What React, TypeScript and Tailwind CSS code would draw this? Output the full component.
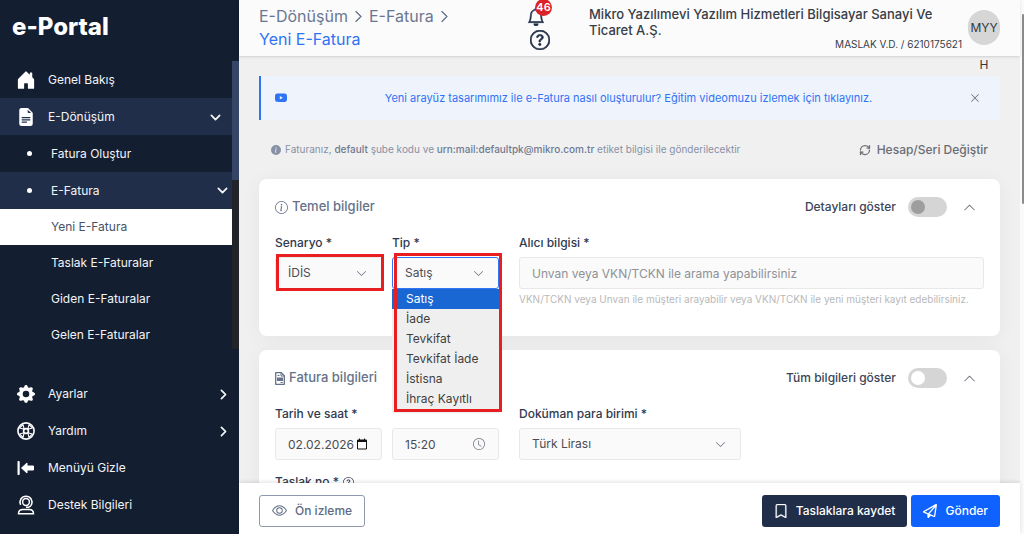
import { useState, type ReactNode } from "react";
import {
  BsBell,
  BsBookmark,
  BsChevronDown,
  BsChevronRight,
  BsChevronUp,
  BsClock,
  BsEye,
  BsFileEarmarkTextFill,
  BsGearFill,
  BsHouseDoorFill,
  BsInfoCircle,
  BsInfoCircleFill,
  BsQuestionCircle,
  BsXLg,
  BsYoutube,
} from "react-icons/bs";
import { FaRegPaperPlane } from "react-icons/fa6";
import { LuRefreshCw } from "react-icons/lu";

const TYPES = ["Satış", "İade", "Tevkifat", "Tevkifat İade", "İstisna", "İhraç Kayıtlı"];

function HideMenuIcon() {
  return (
    <svg viewBox="0 0 18 18" className="size-[18px]" fill="currentColor" aria-hidden="true">
      <rect x="0.5" y="2" width="2.2" height="14" rx="0.8" />
      <path d="M4.500 9l5.500-5v3h6.500v4H10v3z" stroke="currentColor" strokeLinejoin="round" />
    </svg>
  );
}

function HelpRingIcon() {
  return (
    <svg viewBox="0 0 18 18" className="size-[18px]" fill="none" stroke="currentColor" strokeWidth="1.6" aria-hidden="true">
      <circle cx="9" cy="9" r="8.1" />
      <circle cx="9" cy="9" r="2.4" />
      <path d="M7.200 7.200L6 2.600 2.600 6zM10.800 7.200L12 2.600 15.400 6zM7.200 10.800L6 15.400 2.600 12zM10.800 10.800L12 15.400 15.400 12z" strokeWidth="1.1" strokeLinejoin="round" />
    </svg>
  );
}

function SupportIcon() {
  return (
    <svg viewBox="0 0 18 20" className="h-5 w-[18px]" fill="none" stroke="currentColor" strokeWidth="1.5" aria-hidden="true">
      <circle cx="9" cy="7" r="3.400" />
      <path d="M3.600 9.800A6 6 0 1 1 14.400 9.800M9 12.200h2.600a4 4 0 0 0 2.800-2.400" />
      <path d="M1.500 18.700c0-2.700 1.800-4.200 4.400-4.200h6.200c2.600 0 4.400 1.500 4.400 4.200z" />
    </svg>
  );
}

function InvoiceIcon() {
  return (
    <svg viewBox="0 0 10 13" className="h-[13px] w-2.5" fill="none" stroke="currentColor" aria-hidden="true">
      <path d="M1.500 0.700h4.800l3 3v8.600H0.700V0.700z" strokeWidth="1.300" strokeLinejoin="round" />
      <path d="M6 0.700v3.300h3.300M2.500 3.500h2M5.500 10.500h2.200" />
      <rect x="2.500" y="6" width="5" height="2.500" fill="currentColor" />
    </svg>
  );
}

function Logo() {
  return (
    <a href="#" className="flex h-[61px] shrink-0 items-center px-3 pb-2 text-2xl font-extrabold text-white">
      e-Portal
    </a>
  );
}

function NavItem({ icon, label, end, active }: { icon: ReactNode; label: string; end?: ReactNode; active?: boolean }) {
  return (
    <a
      href="#"
      className={`flex h-[37px] shrink-0 items-center gap-3 pt-px pl-4 text-xs text-gray-100 ${active ? "bg-[#212e4a]" : ""}`}
    >
      <span className="flex w-5 justify-center text-white">{icon}</span>
      <span className="flex-1">{label}</span>
      {end}
    </a>
  );
}

function GroupItem({ label, end, active }: { label: string; end?: ReactNode; active?: boolean }) {
  return (
    <a href="#" className={`flex h-[37px] shrink-0 items-center pl-[27px] text-xs text-gray-100 ${active ? "bg-[#212e4a]" : ""}`}>
      <span className="w-6">
        <span className="block size-[5px] rounded-full bg-white" />
      </span>
      <span className="flex-1">{label}</span>
      {end}
    </a>
  );
}

function SubItem({ label, selected }: { label: string; selected?: boolean }) {
  return (
    <a
      href="#"
      className={`flex h-9 shrink-0 items-center pl-[51px] text-xs ${selected ? "bg-white text-[#475166]" : "text-gray-100"}`}
    >
      {label}
    </a>
  );
}

function Sidebar() {
  return (
    <aside className="flex w-[239px] shrink-0 flex-col bg-[#131e31]">
      <Logo />
      <div className="flex h-[288px] overflow-hidden">
        <nav className="flex flex-1 flex-col">
          <NavItem icon={<BsHouseDoorFill size={20} />} label="Genel Bakış" />
          <NavItem
            active
            icon={<BsFileEarmarkTextFill size={18} />}
            label="E-Dönüşüm"
            end={<BsChevronDown size={11} strokeWidth={1.5} className="mr-[11px]" />}
          />
          <GroupItem label="Fatura Oluştur" />
          <GroupItem active label="E-Fatura" end={<BsChevronDown size={11} strokeWidth={1.5} className="mr-1" />} />
          <SubItem selected label="Yeni E-Fatura" />
          <SubItem label="Taslak E-Faturalar" />
          <SubItem label="Giden E-Faturalar" />
          <SubItem label="Gelen E-Faturalar" />
        </nav>
        <div className="w-[7px] bg-[#212529]">
          <div className="h-[119px] bg-[#364566]" />
        </div>
      </div>
      <div className="flex flex-col pt-[26px]">
        <NavItem icon={<BsGearFill size={18} />} label="Ayarlar" end={<BsChevronRight size={11} strokeWidth={1.5} className="mr-[10px]" />} />
        <NavItem icon={<HelpRingIcon />} label="Yardım" end={<BsChevronRight size={11} strokeWidth={1.5} className="mr-[10px]" />} />
        <NavItem icon={<HideMenuIcon />} label="Menüyü Gizle" />
        <NavItem icon={<SupportIcon />} label="Destek Bilgileri" />
      </div>
    </aside>
  );
}

function Header() {
  return (
    <header className="z-10 flex h-14 shrink-0 bg-[#fbfbfb] pr-5 pl-5 shadow">
      <div className="flex w-[268px] flex-col pt-[5px] text-base leading-[23px] text-[#6b7790]">
        <div className="flex items-center gap-1">
          <a href="#">E-Dönüşüm</a>
          <BsChevronRight size={13} strokeWidth={1} />
          <a href="#">E-Fatura</a>
          <BsChevronRight size={13} strokeWidth={1} />
        </div>
        <h1 className="text-[#2f73f6]">Yeni E-Fatura</h1>
      </div>
      <div className="flex flex-col items-center gap-1 pt-2 text-[#1f2b44]">
        <button aria-label="Bildirimler" className="relative mr-2">
          <BsBell size={18} strokeWidth={0.5} />
          <span className="absolute -top-[9px] left-2 flex size-[17px] items-center justify-center rounded-full bg-[#dc2127] text-[11px] font-semibold text-white">
            46
          </span>
        </button>
        <button aria-label="Yardım">
          <BsQuestionCircle size={20} strokeWidth={0.5} />
        </button>
      </div>
      <div className="ml-9 flex-1 pt-1.5 text-[13px] leading-4 font-medium text-[#383d47]">
        <p>Mikro Yazılımevi Yazılım Hizmetleri Bilgisayar Sanayi Ve Ticaret A.Ş.</p>
        <p className="text-right text-[10px] leading-3 font-normal">MASLAK V.D. / 6210175621</p>
      </div>
      <div className="ml-1.5 flex h-[70px] w-8 flex-col items-center pt-2.5 text-xs text-[#333740]">
        <span className="flex h-[35px] w-8 shrink-0 items-center justify-center rounded-full bg-[#d6d6d6]">MYY</span>
        <span className="pt-3">H</span>
      </div>
    </header>
  );
}

function Toggle({ label, disabled }: { label: string; disabled?: boolean }) {
  return (
    <label className="flex items-center gap-3 text-xs font-medium text-[#3b4558]">
      {label}
      <input
        type="checkbox"
        role="switch"
        disabled={disabled}
        className="h-5 w-[39px] appearance-none rounded-full bg-[#d5d5d5] p-[3px] before:block before:size-3.5 before:rounded-full before:bg-white checked:bg-[#0f62fe] disabled:before:bg-[#9e9e9e]"
      />
    </label>
  );
}

function Card({ icon, title, toggle, className = "", children }: { icon: ReactNode; title: string; toggle: ReactNode; className?: string; children: ReactNode }) {
  return (
    <section className={`rounded-lg bg-white px-4 shadow-[0_2px_20px_rgba(0,0,0,0.05)] ${className}`}>
      <div className="flex h-14 items-center">
        <h2 className="flex flex-1 items-center gap-1 text-[13px] font-medium text-[#66728a]">
          {icon}
          {title}
        </h2>
        {toggle}
        <button aria-label="Daralt" className="mr-2 ml-4 text-[#666b75]">
          <BsChevronUp size={13} />
        </button>
      </div>
      {children}
    </section>
  );
}

const labelClass = "mb-1.5 block text-xs leading-4 font-medium text-[#303a4e]";
const fieldClass = "h-8 w-full appearance-none rounded-[3px] border border-[#e8e8e8] bg-[#fafafa] px-3 text-xs text-[#4a4d54] outline-none";

function SelectField({ id, label, options, className }: { id: string; label: string; options: string[]; className: string }) {
  return (
    <div className={className}>
      <label htmlFor={id} className={labelClass}>{label}</label>
      <div className="relative">
        <select id={id} className={fieldClass}>
          {options.map((o) => (
            <option key={o}>{o}</option>
          ))}
        </select>
        <BsChevronDown size={11} className="pointer-events-none absolute top-[11px] right-[15px] text-[#666f80]" />
      </div>
    </div>
  );
}

function TypeField() {
  const [value, setValue] = useState("Satış");
  return (
    <div className="relative w-[107px]">
      <label htmlFor="tip" className={labelClass}>Tip *</label>
      <div className="relative">
        <select
          id="tip"
          value={value}
          onChange={(e) => setValue(e.target.value)}
          className="h-8 w-full appearance-none rounded-[3px] border border-[#2f73f6] bg-[#fafafa] px-3 text-xs text-[#4a4d54] outline-none"
        >
          {TYPES.map((t) => (
            <option key={t}>{t}</option>
          ))}
        </select>
        <BsChevronDown size={11} className="pointer-events-none absolute top-[11px] right-[15px] text-[#666f80]" />
      </div>
      <ul className="absolute top-[54px] left-0 z-10 w-[107px] bg-[#efefef] pb-1 text-xs text-[#3f3f3f]">
        {TYPES.map((t) => (
          <li
            key={t}
            onClick={() => setValue(t)}
            className={`flex h-5 items-center pl-3.5 ${t === value ? "bg-[#1967d2] text-white" : ""}`}
          >
            {t}
          </li>
        ))}
      </ul>
      <div className="pointer-events-none absolute top-[18px] left-[2px] z-20 h-[159px] w-[108px] border-3 border-[#e81e20]" />
    </div>
  );
}

function Footer() {
  return (
    <footer className="z-30 flex h-[51px] shrink-0 items-center gap-1 bg-white px-5 pt-1 text-xs font-medium shadow-[0_-1px_4px_rgba(0,0,0,0.12)]">
      <button className="flex h-8 items-center gap-2 rounded-[3px] border border-[#8f99ae] px-3 text-[#5d6a83]">
        <BsEye size={15} />
        Ön izleme
      </button>
      <button className="ml-auto flex h-8 items-center gap-2 rounded-[3px] bg-[#212e4a] px-3 text-white">
        <BsBookmark size={14} strokeWidth={0.5} />
        Taslaklara kaydet
      </button>
      <button className="flex h-8 items-center gap-2 rounded-[3px] bg-[#0f62fe] px-3 text-white">
        <FaRegPaperPlane size={14} />
        Gönder
      </button>
    </footer>
  );
}

export default function App() {
  return (
    <div className="flex h-screen overflow-hidden bg-[#f0f0f0] font-[Inter,sans-serif]">
      <Sidebar />
      <div className="flex min-w-0 flex-1 flex-col">
        <Header />
        <main className="flex-1 overflow-hidden px-5 pt-5">
          <div className="flex h-11 items-center border-l-2 border-[#2f73f6] bg-[#eff3fb] pr-5 pl-3.5 text-[11px] text-[#2f73f6]">
            <BsYoutube size={12} />
            <a href="#" className="flex-1 text-center">
              Yeni arayüz tasarımımız ile e-Fatura nasıl oluşturulur? Eğitim videomuzu izlemek için tıklayınız.
            </a>
            <button aria-label="Kapat" className="text-[#555b66]">
              <BsXLg size={10} />
            </button>
          </div>

          <div className="flex h-[59px] items-center justify-between px-3 text-[10px] text-[#8791a5]">
            <p className="flex items-center gap-1">
              <BsInfoCircleFill size={10} />
              <span>
                Faturanız, <b className="font-medium text-[#6f7a90]">default</b> şube kodu ve{" "}
                <b className="font-medium text-[#6f7a90]">urn:mail:defaultpk@mikro.com.tr</b> etiket bilgisi ile gönderilecektir
              </span>
            </p>
            <button className="flex items-center gap-1.5 text-xs font-medium text-[#6a6d73]">
              <LuRefreshCw size={12} strokeWidth={2.5} />
              Hesap/Seri Değiştir
            </button>
          </div>

          <Card
            className="h-[157px]"
            icon={<BsInfoCircle size={13} />}
            title="Temel bilgiler"
            toggle={<Toggle label="Detayları göster" disabled />}
          >
            <div className="flex">
              <div className="relative mr-2.5">
                <SelectField id="senaryo" label="Senaryo *" options={["İDİS"]} className="w-[107px]" />
                <div className="pointer-events-none absolute top-[19px] left-[1px] h-[37px] w-[108px] border-3 border-[#e81e20]" />
              </div>
              <TypeField />
              <div className="ml-5 flex-1">
                <label htmlFor="alici" className={labelClass}>Alıcı bilgisi *</label>
                <input id="alici" className={`${fieldClass} placeholder:text-[#8f9196]`} placeholder="Unvan veya VKN/TCKN ile arama yapabilirsiniz" />
                <p className="pt-1 text-[10px] leading-3 text-[#b9b9b9]">
                  VKN/TCKN veya Unvan ile müşteri arayabilir veya VKN/TCKN ile yeni müşteri kayıt edebilirsiniz.
                </p>
              </div>
            </div>
          </Card>

          <Card
            className="mt-3.5 h-56"
            icon={<InvoiceIcon />}
            title="Fatura bilgileri"
            toggle={<Toggle label="Tüm bilgileri göster" />}
          >
            <div className="flex">
              <div className="mr-2.5 w-[107px]">
                <label htmlFor="tarih" className={labelClass}>Tarih ve saat *</label>
                <div className="relative">
                  <input id="tarih" className={fieldClass} defaultValue="02.02.2026" />
                  <svg viewBox="0 0 12 12" className="absolute top-2.5 right-3.5 size-3" fill="none" stroke="#111" aria-hidden="true">
                    <path d="M1.500 2h9v9h-9zM3.500 0.500v2M8.500 0.500v2" />
                    <path d="M1 3h10" strokeWidth="2" />
                  </svg>
                </div>
              </div>
              <div className="relative w-[107px] pt-[22px]">
                <input aria-label="Saat" className={fieldClass} defaultValue="15:20" />
                <BsClock size={12} className="absolute top-8 right-3.5 text-[#6b7280]" />
              </div>
              <SelectField id="para" label="Doküman para birimi *" options={["Türk Lirası"]} className="ml-5 w-[222px]" />
            </div>
            <div className="mt-3.5 flex items-center gap-1 text-xs font-medium text-[#303a4e]">
              <label htmlFor="taslak">Taslak no *</label>
              <BsQuestionCircle size={11} />
            </div>
            <input id="taslak" className={fieldClass} />
          </Card>
        </main>
        <Footer />
      </div>
      <div className="w-1 bg-[#fafafa]">
        <div className="mt-3.5 ml-0.5 h-[190px] rounded-full bg-[#8b8b8b]" />
      </div>
    </div>
  );
}
